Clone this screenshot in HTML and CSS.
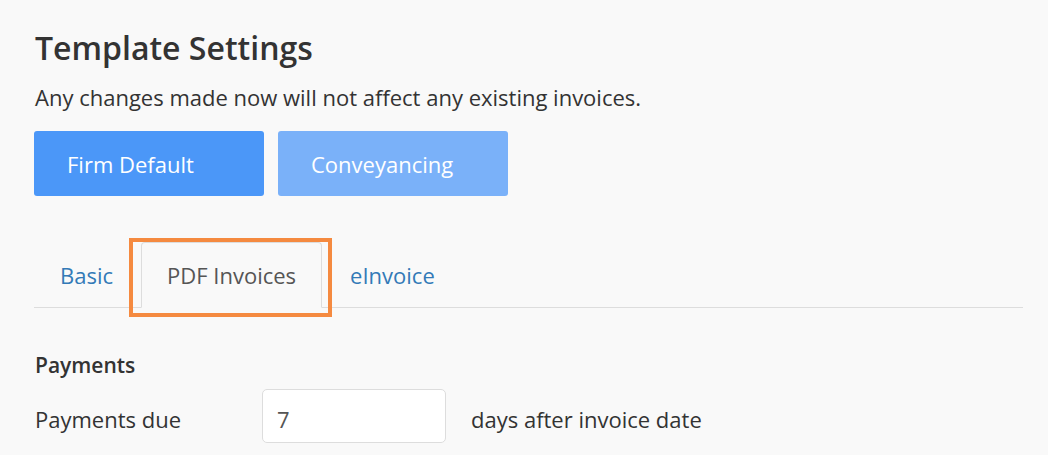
FILE: index.html
```html
<!DOCTYPE html>
<html>
<head>
    <title>Template Settings</title>
    <link rel="stylesheet" href="styles.css">
</head>
<body>
    <div class="container">
        <h1>Template Settings</h1>
        <p class="note">Any changes made now will not affect any existing invoices.</p>
        <div class="template-buttons">
            <button class="template-btn active">Firm Default</button>
            <button class="template-btn">Conveyancing</button>
        </div>
        <ul class="tabs">
            <li class="tab"><a href="#">Basic</a></li>
            <li class="tab active"><a href="#">PDF Invoices</a><span class="highlight"></span></li>
            <li class="tab"><a href="#">eInvoice</a></li>
        </ul>
        <h3 class="section-title">Payments</h3>
        <div class="form-row">
            <label for="paymentsDue">Payments due</label>
            <input id="paymentsDue" type="text" value="7">
            <span class="suffix">days after invoice date</span>
        </div>
    </div>
</body>
</html>
```

FILE: styles.css
```css
body {
    font-family: "Open Sans", Arial, sans-serif;
    margin: 0;
    padding: 0;
    background-color: #f9f9f9;
    color: #333;
}
.container {
    padding: 28px 25px 0 35px;
}
h1 {
    font-size: 32px;
    font-weight: 600;
    margin: 0 0 14px 0;
    line-height: 40px;
}
.note {
    font-size: 22px;
    margin: 0 0 19px 0;
    line-height: 30px;
}
.template-buttons {
    display: flex;
    gap: 14px;
    margin-left: -1px;
}
.template-btn {
    width: 230px;
    height: 65px;
    border: none;
    border-radius: 3px;
    background-color: #7ab1f9;
    color: white;
    font-family: inherit;
    font-size: 22px;
    text-align: left;
    padding: 0 0 0 33px;
    cursor: pointer;
}
.template-btn.active {
    background-color: #4b97f8;
}
.tabs {
    list-style: none;
    display: flex;
    margin: 46px 0 0 -1px;
    padding: 0;
    border-bottom: 1px solid #ddd;
}
.tab {
    position: relative;
    margin-bottom: -1px;
}
.tab a {
    display: block;
    padding: 0 25px;
    line-height: 64px;
    font-size: 22px;
    color: #337ab7;
    text-decoration: none;
    border: 1px solid transparent;
    border-radius: 4px 4px 0 0;
    margin-right: 2px;
}
.tab.active a {
    color: #555;
    background-color: #f9f9f9;
    border-color: #ddd #ddd transparent #ddd;
}
.highlight {
    position: absolute;
    left: -12px;
    top: -4px;
    right: -8px;
    bottom: -9px;
    border: 4px solid #f58a40;
    pointer-events: none;
}
.section-title {
    font-size: 21px;
    font-weight: 600;
    line-height: 30px;
    margin: 42px 0 9px 0;
}
.form-row {
    display: flex;
    align-items: center;
}
.form-row label {
    width: 227px;
    font-size: 22px;
    padding-top: 6px;
}
.form-row input {
    width: 184px;
    height: 54px;
    box-sizing: border-box;
    border: 1px solid #ddd;
    border-radius: 5px;
    background: white;
    font-family: inherit;
    font-size: 22px;
    color: #555;
    padding: 5px 0 0 14px;
    margin-right: 25px;
}
.suffix {
    font-size: 22px;
    padding-top: 6px;
}
```
